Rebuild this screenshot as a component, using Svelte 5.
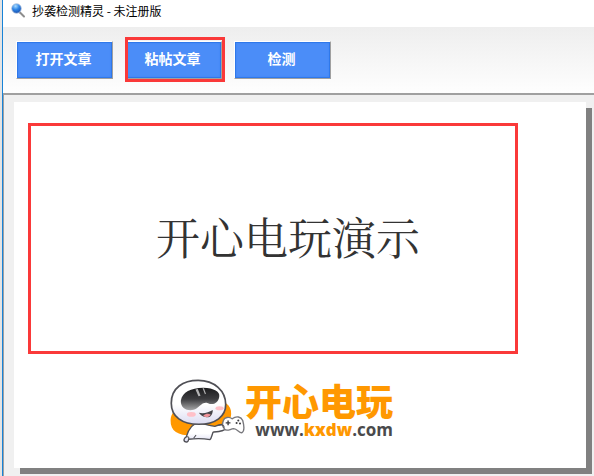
<script>
	// ---- toolbar ----
	const actions = [
		{ id: 'open', label: '打开文章' },
		{ id: 'paste', label: '粘帖文章', marked: true },
		{ id: 'check', label: '检测' }
	];
</script>

<div class="window">
	<header class="titlebar">
		<svg class="app-icon" viewBox="0 0 16 16" aria-hidden="true">
			<defs>
				<radialGradient id="lens" cx="40%" cy="25%" r="75%">
					<stop offset="0" stop-color="#a9dcff" />
					<stop offset="0.5" stop-color="#2f86e6" />
					<stop offset="1" stop-color="#174fae" />
				</radialGradient>
			</defs>
			<path d="M9 9.500L13 13.500" stroke="#8d8d8d" stroke-width="2" stroke-linecap="round" />
			<circle cx="5.500" cy="5.500" r="4.800" fill="url(#lens)" stroke="#b4c4dd" stroke-width="0.800" />
		</svg>
		<span>抄袭检测精灵 - 未注册版</span>
	</header>

	<nav class="toolbar">
		{#each actions as action (action.id)}
			<div class="slot" class:marked={action.marked}>
				<button type="button">{action.label}</button>
			</div>
		{/each}
	</nav>

	<main class="workspace">
		<article class="paper">
			<p class="sample">开心电玩演示</p>

			<div class="brand">
				<svg class="mascot" viewBox="26 24 222 194" aria-hidden="true">
					<defs>
						<linearGradient id="visor" x1="0" y1="0" x2="0" y2="1">
							<stop offset="0" stop-color="#1b1b1d" />
							<stop offset="0.500" stop-color="#3c3c3f" />
							<stop offset="1" stop-color="#a8a8aa" />
						</linearGradient>
						<linearGradient id="skin" x1="0" y1="0" x2="0" y2="1">
							<stop offset="0.550" stop-color="#ffffff" />
							<stop offset="1" stop-color="#dcdcf2" />
						</linearGradient>
					</defs>
					<path d="M30 148C32 110 80 90 130 88C180 84 210 98 208 130C207 166 160 193 92 193C52 193 29 180 30 148Z" fill="#ff9800" />
					<path d="M75 212C66 209 69 201 76 197C82 177 92 158 112 156C132 160 143 164 160 166C174 160 189 158 196 168C190 180 176 181 155 183C151 193 150 202 146 205C123 201 98 202 83 204C82 210 80 213 75 212Z" fill="url(#skin)" stroke="#505056" stroke-width="4" stroke-linejoin="round" />
					<path d="M77 197C83 196 85 199 83 204M105 192C101 196 99 198 98 201" fill="none" stroke="#505056" stroke-width="3" />
					<path d="M32 98C32 53 67 31 111 31C159 31 192 62 192 102C192 137 163 160 113 160C64 160 32 138 32 98Z" fill="url(#skin)" stroke="#505056" stroke-width="5" />
					<path d="M60 91C65 65 89 54 126 53C158 54 176 65 173 79C170 98 154 105 140 98C126 93 119 104 106 114C91 124 59 120 60 91Z" fill="url(#visor)" />
					<path d="M103 58L110 56L118 76L112 78ZM124 54L128 54L134 70L131 72Z" fill="#fff" opacity="0.650" />
					<ellipse cx="91" cy="131" rx="13" ry="7" fill="#ffc0c8" />
					<ellipse cx="174" cy="113" rx="12" ry="6" fill="#ffc0c8" />
					<path d="M113 126C129 130 141 124 154 118C154 136 143 142 132 139C123 138 118 132 113 126Z" fill="#444449" />
					<path d="M126 135C133 128 142 128 148 132C143 140 132 141 126 135Z" fill="#ee9299" />
					<path d="M185 149C188 139 202 137 211 144C224 134 237 138 242 149C246 164 248 181 239 185C230 185 227 174 215 173C203 175 193 183 188 173C183 169 182 158 185 149Z" fill="#fff" stroke="#77777c" stroke-width="4" />
					<path d="M199 149V163M192 156H206" stroke="#3c3c40" stroke-width="4" />
					<circle cx="229" cy="149" r="3" fill="#3c3c40" />
					<circle cx="224" cy="156" r="3" fill="#3c3c40" />
					<circle cx="234" cy="158" r="3" fill="#3c3c40" />
					<path d="M170 164C181 159 189 163 187 171" fill="none" stroke="#505056" stroke-width="3" />
				</svg>
				<div class="wordmark">
					<strong>开心电玩</strong>
					<span class="site">www.<b>kxdw</b>.com</span>
				</div>
			</div>
		</article>
	</main>
</div>

<style>
	:global(body) {
		margin: 0;
		background: #e4e4e4;
	}
	.window {
		box-sizing: border-box;
		display: flex;
		flex-direction: column;
		min-height: 100vh;
		margin-left: 2px;
		border-left: 1px solid #1883d7;
		background: #f0f0f0;
		font-family: 'Noto Sans CJK SC', sans-serif;
	}
	.titlebar {
		display: flex;
		align-items: center;
		gap: 5px;
		height: 27px;
		box-sizing: border-box;
		padding: 0 8px 6px;
		background: #fff;
		color: #000;
		font-size: 12px;
		line-height: 20px;
	}
	.app-icon {
		width: 16px;
		height: 16px;
	}
	.toolbar {
		display: flex;
		gap: 12px;
		padding: 14px 13px;
		border-bottom: 2px solid #a0a0a0;
		background: linear-gradient(#eeeeee, #fefefe);
	}
	.slot {
		position: relative;
	}
	.slot.marked::after {
		content: '';
		position: absolute;
		inset: -4px -3px -3px 0;
		border: 3px solid #fa3939;
		pointer-events: none;
	}
	button {
		display: block;
		box-sizing: border-box;
		width: 97px;
		height: 38px;
		padding: 0 2px 4px 0;
		border: 1px solid;
		border-color: #fff #a0a0a0 #a0a0a0 #fff;
		background: #4b8df8;
		box-shadow:
			inset 0 0 0 1px #2f78ea,
			inset 0 0 2px 1px #3a82f2;
		color: #fff;
		font-family: inherit;
		font-size: 14px;
		font-weight: 700;
		cursor: pointer;
	}
	.workspace {
		display: flex;
		flex: 1;
		padding: 7px 8px 8px 10px;
		border-left: 1px solid #a0a0a0;
	}
	.paper {
		flex: 1;
		padding: 21px 68px 24px 14px;
		background: #fff;
		box-shadow: 6px 6px 0 #808080;
	}
	.sample {
		display: flex;
		align-items: center;
		justify-content: center;
		box-sizing: border-box;
		min-height: 231px;
		margin: 0;
		padding: 0 0 6px 30px;
		border: 3px solid #fa3939;
		color: #333;
		font-family: 'Noto Serif CJK SC', 'Noto Sans CJK SC', serif;
		font-size: 44px;
		font-weight: 400;
	}
	.brand {
		display: flex;
		align-items: center;
		justify-content: center;
		margin-top: 24px;
		padding-left: 16px;
	}
	.mascot {
		flex: none;
		width: 76px;
		height: 66px;
	}
	.wordmark {
		display: flex;
		flex-direction: column;
		align-items: flex-end;
	}
	.wordmark strong {
		color: #ff9800;
		font-family: 'Liberation Sans', 'Noto Sans CJK SC', sans-serif;
		font-size: 37px;
		font-weight: 900;
		line-height: 38px;
	}
	.site {
		color: #4a4a4c;
		font-family: 'Open Sans', sans-serif;
		font-size: 17px;
		font-weight: 700;
		line-height: 14px;
	}
	.site b {
		color: #ff9800;
	}
</style>
